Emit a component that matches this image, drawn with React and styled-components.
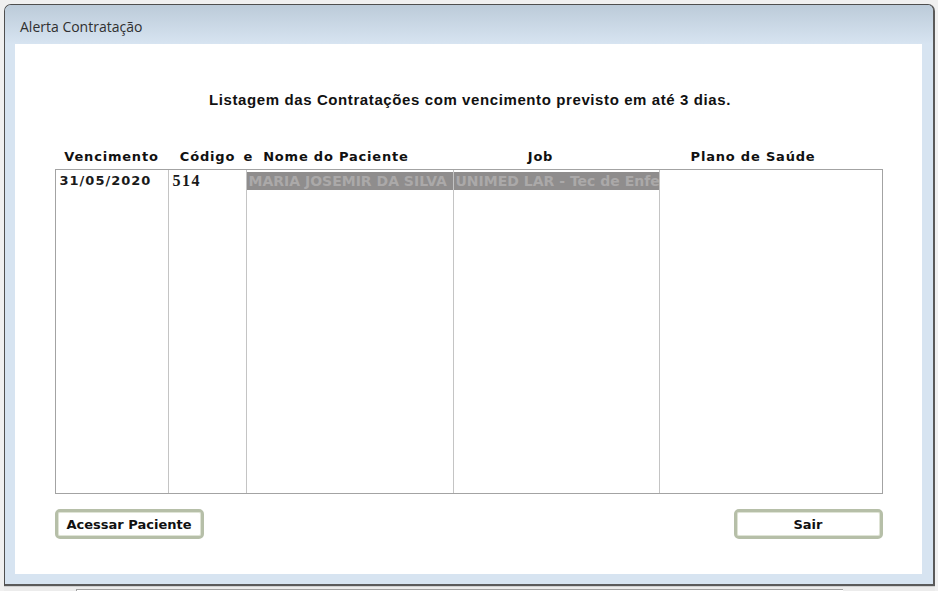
import styled, { createGlobalStyle } from "styled-components"

const GlobalStyle = createGlobalStyle`
  html, body {
    margin: 0;
    padding: 0;
    background: #f0f0f0;
  }
  body {
    width: 938px;
    height: 591px;
    overflow: hidden;
  }
`

const columns = [
  { key: "venc", width: 113 },
  { key: "cod", width: 78 },
  { key: "nome", width: 207 },
  { key: "job", width: 206 },
  { key: "plano", width: 222 },
]

const rows = [
  {
    venc: "31/05/2020",
    cod: "514",
    nome: "MARIA JOSEMIR DA SILVA",
    job: "UNIMED LAR - Tec de Enfer",
    plano: "",
  },
]

export default function App() {
  return (
    <>
      <GlobalStyle />
      <Screen>
        <Window>
          <TitleBar>Alerta Contratação</TitleBar>
          <Frame>
            <Client>
              <Heading>Listagem das Contratações com vencimento previsto em até 3 dias.</Heading>
              <HeaderRow>
                <HeaderCell $w={114}>Vencimento</HeaderCell>
                <HeaderCell $w={78}>Código</HeaderCell>
                <HeaderCell $w={207} $align="flex-start">
                  <Conj>e</Conj>Nome do Paciente
                </HeaderCell>
                <HeaderCell $w={206} $pad="0 32px 0 0">Job</HeaderCell>
                <HeaderCell $w={223} $pad="0 36px 0 0">Plano de Saúde</HeaderCell>
              </HeaderRow>
              <ListBox>
                {columns.map((col, i) => (
                  <Column key={col.key} $w={col.width} $last={i === columns.length - 1}>
                    {rows.map((r, j) => (
                      <Cell key={j} $kind={col.key}>{r[col.key]}</Cell>
                    ))}
                  </Column>
                ))}
              </ListBox>
              <ButtonRow>
                <Button>Acessar Paciente</Button>
                <Button>Sair</Button>
              </ButtonRow>
            </Client>
          </Frame>
        </Window>
        <StatusStrip>
          <StatusBox />
        </StatusStrip>
      </Screen>
    </>
  )
}

const Screen = styled.div`
  width: 938px;
  height: 591px;
  padding: 4px 3px 0 4px;
  box-sizing: border-box;
  display: flex;
  flex-direction: column;
`

const Window = styled.div`
  height: 582px;
  box-sizing: border-box;
  border: 1px solid #4f4f4f;
  border-right: 2px solid #5a5a5a;
  border-bottom: 2px solid #5a5a5a;
  border-radius: 7px 7px 0 0;
  background: #d7e4f1;
  display: flex;
  flex-direction: column;
  overflow: hidden;
`

const TitleBar = styled.div`
  height: 39px;
  flex-shrink: 0;
  display: flex;
  align-items: center;
  padding: 3px 0 0 15px;
  box-sizing: border-box;
  background: linear-gradient(#bccbd9, #d7e4f1);
  font-family: "Open Sans", "Noto Sans", sans-serif;
  font-size: 14px;
  color: #303030;
`

const Frame = styled.div`
  flex: 1;
  display: flex;
  padding: 0 11px 10px 10px;
`

const Client = styled.div`
  flex: 1;
  background: #fff;
  display: flex;
  flex-direction: column;
  align-items: center;
  padding-top: 47px;
`

const Heading = styled.div`
  font-family: "Liberation Sans", Arial, sans-serif;
  font-weight: bold;
  font-size: 15px;
  letter-spacing: 0.6px;
  line-height: 17px;
  color: #111;
  margin-left: 3px;
`

const HeaderRow = styled.div`
  display: flex;
  width: 828px;
  margin-top: 40px;
  height: 17px;
`

const HeaderCell = styled.div`
  width: ${(p) => p.$w}px;
  flex-shrink: 0;
  display: flex;
  justify-content: ${(p) => p.$align || "center"};
  align-items: center;
  padding: ${(p) => p.$pad || "0"};
  box-sizing: border-box;
  font-family: "DejaVu Sans", Verdana, sans-serif;
  font-weight: bold;
  font-size: 13px;
  letter-spacing: 0.8px;
  line-height: 17px;
  color: #111;
  white-space: nowrap;
`

const Conj = styled.span`
  margin: 0 10px 0 -3px;
`

const ListBox = styled.div`
  margin-top: 4px;
  width: 828px;
  height: 325px;
  box-sizing: border-box;
  border: 1px solid #a3a3a3;
  display: flex;
`

const Column = styled.div`
  width: ${(p) => p.$w}px;
  flex-shrink: 0;
  box-sizing: border-box;
  border-right: ${(p) => (p.$last ? "none" : "1px solid #c4c4c4")};
  padding-top: 2px;
  overflow: hidden;
`

const Cell = styled.div`
  height: 18px;
  line-height: 18px;
  white-space: nowrap;
  overflow: hidden;
  color: #1a1a1a;
  font-weight: bold;
  padding-left: 4px;
  font-family: ${(p) =>
    p.$kind === "cod" ? `"Liberation Serif", "Times New Roman", serif` : `"DejaVu Sans", Verdana, sans-serif`};
  font-size: ${(p) => (p.$kind === "cod" ? "16px" : "13px")};
  letter-spacing: ${(p) => (p.$kind === "cod" ? "1.5px" : p.$kind === "venc" ? "1px" : "0")};
  ${(p) =>
    (p.$kind === "nome" || p.$kind === "job") &&
    `
    background: #8f8d8d;
    color: #aba9a9;
    font-size: 14px;
    padding-left: 2px;
  `}
`

const ButtonRow = styled.div`
  width: 828px;
  display: flex;
  justify-content: space-between;
  margin-top: 15px;
`

const Button = styled.button`
  width: 149px;
  height: 30px;
  box-sizing: border-box;
  background: #fff;
  border: 3px solid #b6bfa8;
  border-radius: 5px;
  box-shadow: inset 0 0 0 1px #dfe4d6;
  font-family: "DejaVu Sans", Verdana, sans-serif;
  font-weight: bold;
  font-size: 13px;
  color: #111;
  padding: 0;
`

const StatusStrip = styled.div`
  flex: 1;
  display: flex;
  padding: 2px 0 0 72px;
  background: #ececec;
  border-top: 1px solid #d0d0d0;
`

const StatusBox = styled.div`
  width: 766px;
  background: #fff;
  border-top: 1px solid #a0a0a0;
  border-left: 1px solid #a0a0a0;
`
